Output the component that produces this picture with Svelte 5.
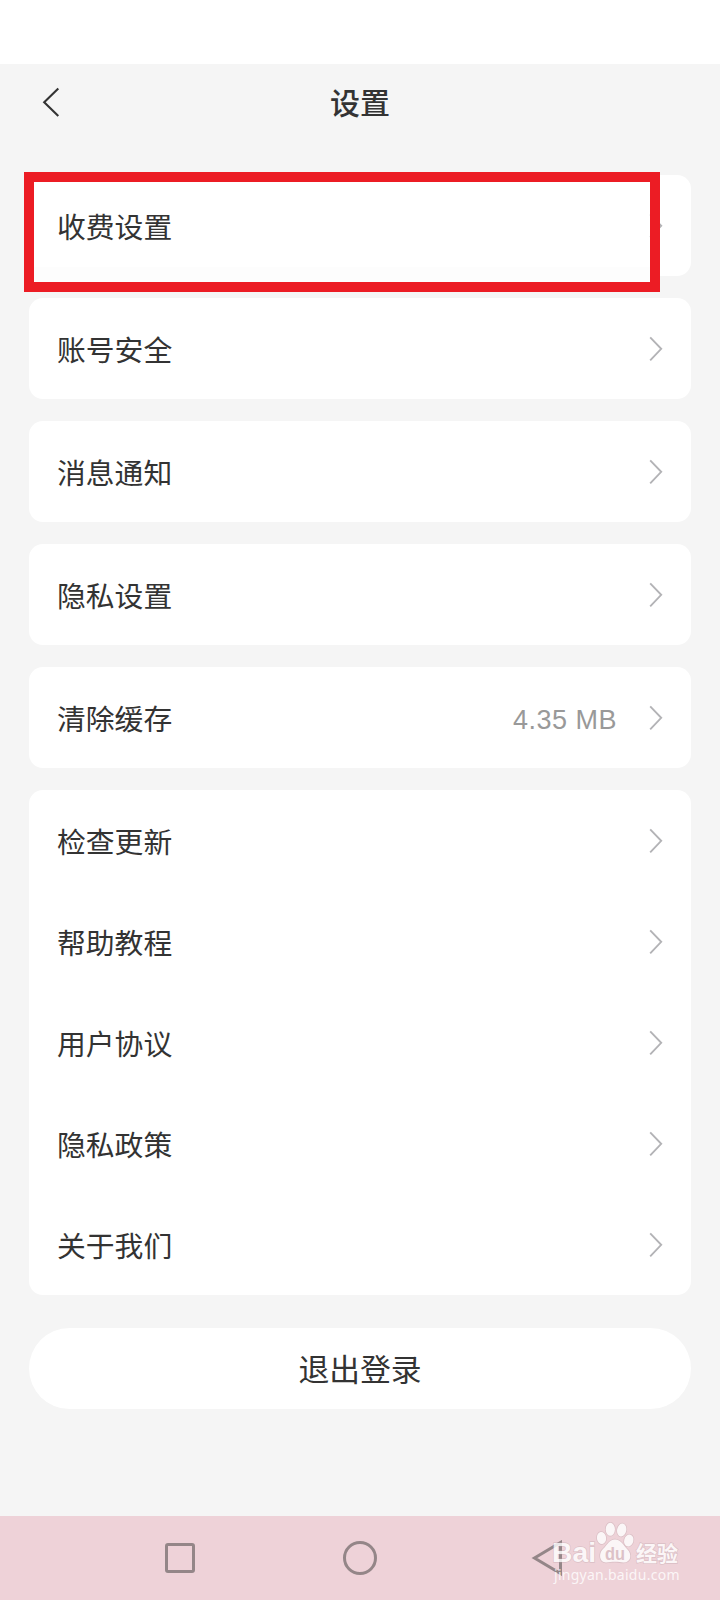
<script lang="ts">
    type Item = { label: string; value?: string };

    const groups: Item[][] = [
        [{ label: "收费设置" }],
        [{ label: "账号安全" }],
        [{ label: "消息通知" }],
        [{ label: "隐私设置" }],
        [{ label: "清除缓存", value: "4.35 MB" }],
        [
            { label: "检查更新" },
            { label: "帮助教程" },
            { label: "用户协议" },
            { label: "隐私政策" },
            { label: "关于我们" },
        ],
    ];
</script>

<div class="screen">
    <div class="status-bar"></div>

    <header>
        <svg class="back" width="20" height="32" viewBox="0 0 20 32">
            <path d="M17.3 2.5 3.2 16.2 17.3 30" />
        </svg>
        <h1>设置</h1>
    </header>

    <main>
        {#each groups as group, i}
            <div class="card">
                {#each group as item}
                    <div class="row">
                        <span class="label">{item.label}</span>
                        {#if item.value}
                            <span class="value">{item.value}</span>
                        {/if}
                        <svg class="chevron" width="14" height="26" viewBox="0 0 14 26">
                            <path d="M1.2 1.3 12.2 12.8 1.2 24.3" />
                        </svg>
                    </div>
                {/each}
                {#if i == 0}
                    <div class="highlight"></div>
                {/if}
            </div>
        {/each}

        <button class="logout">退出登录</button>
    </main>

    <nav>
        <svg width="36" height="36" viewBox="0 0 36 36">
            <rect x="4.5" y="4.5" width="27" height="27" rx="1.5" />
        </svg>
        <svg width="36" height="36" viewBox="0 0 36 36">
            <circle cx="18" cy="18" r="15.5" />
        </svg>
        <svg width="36" height="36" viewBox="0 0 36 36">
            <path d="M31.5 2.5v31L5.5 18Z" />
        </svg>

        <div class="watermark">
            <svg width="150" height="66" viewBox="0 0 150 66">
                <ellipse cx="69.5" cy="17" rx="4.6" ry="6" transform="rotate(-8 69.5 17)" />
                <ellipse cx="78.3" cy="8.3" rx="4.6" ry="6.5" />
                <ellipse cx="89.7" cy="9" rx="4.6" ry="6.5" transform="rotate(10 89.7 9)" />
                <ellipse cx="96.8" cy="19.5" rx="4.6" ry="6" transform="rotate(16 96.8 19.5)" />
                <path
                    d="M83 18.5C77 18.5 75.5 24 71 28C66.5 32 67 41.5 74 41.5C77.5 41.5 79 40.8 83 40.8S88.5 41.5 91.5 41.5C99.5 41.5 100 33 95.5 28.5C91 24 89 18.5 83 18.5Z"
                />
                <text class="bai" x="20" y="41" textLength="44" lengthAdjust="spacingAndGlyphs">Bai</text>
                <text class="du" x="73" y="38.5" textLength="20" lengthAdjust="spacingAndGlyphs">du</text>
                <text class="jingyan" x="104" y="39.5" textLength="42">经验</text>
                <text class="url" x="22" y="58.5" textLength="125.5">jingyan.baidu.com</text>
            </svg>
        </div>
    </nav>
</div>

<style>
    :global(body) {
        margin: 0;
    }

    .screen {
        display: flex;
        flex-direction: column;
        height: 1600px;
        background-color: #f5f5f5;
        color: #333;
        font-family: "Noto Sans CJK SC", sans-serif;
    }

    .status-bar {
        height: 64px;
        background-color: #fff;
    }

    header {
        display: grid;
        grid-template-columns: 80px 1fr 80px;
        align-items: center;
        height: 76px;
    }

    .back {
        margin-left: 41px;
    }

    h1 {
        margin: 0;
        padding-bottom: 3px;
        font-size: 30px;
        font-weight: 500;
        line-height: 40px;
        text-align: center;
    }

    main {
        flex: 1;
        display: flex;
        flex-direction: column;
        gap: 22px;
        padding: 35px 29px 0;
    }

    .card {
        position: relative;
        border-radius: 14px;
        background-color: #fff;
    }

    .row {
        display: flex;
        align-items: center;
        height: 101px;
        padding: 0 28px;
    }

    .label {
        flex: 1;
        font-size: 28.8px;
        line-height: 40px;
    }

    .value {
        margin-right: 32px;
        padding-top: 5px;
        color: #999;
        font-family: "Liberation Sans", sans-serif;
        font-size: 27px;
        letter-spacing: 0.5px;
    }

    svg {
        fill: none;
    }

    .back path {
        stroke: #333;
        stroke-width: 2.1;
    }

    .chevron path {
        stroke: #b3b3b6;
        stroke-width: 1.9;
    }

    /* Sits over the first card and runs past its edges */
    .highlight {
        position: absolute;
        top: -3px;
        left: -5px;
        box-sizing: border-box;
        width: 636px;
        height: 120px;
        border: 10px solid #ec1c24;
        background: linear-gradient(transparent 85px, #fdfdfd 85px);
    }

    .logout {
        height: 81px;
        margin-top: 11px;
        padding: 0 0 2px;
        border: none;
        border-radius: 41px;
        background-color: #fff;
        color: #333;
        font-family: inherit;
        font-size: 30.8px;
        line-height: 40px;
    }

    nav {
        position: relative;
        display: flex;
        justify-content: space-between;
        align-items: center;
        height: 84px;
        padding: 0 156px 0 162px;
        box-sizing: border-box;
        background-color: #eed2d8;
    }

    nav > svg {
        stroke: #948688;
        stroke-width: 3;
    }

    nav > svg:nth-child(2) {
        margin-left: -8px;
    }

    nav > svg:nth-child(3) {
        margin-right: -1px;
    }

    .watermark {
        position: absolute;
        top: 5px;
        left: 532px;
    }

    .watermark svg {
        display: block;
        fill: #fff;
        stroke: #b99ea5;
        stroke-opacity: 0.45;
        stroke-width: 1.4;
        paint-order: stroke;
        opacity: 0.8;
    }

    .watermark .bai {
        font: bold 28.5px "Liberation Sans", sans-serif;
    }

    .watermark .du {
        fill: #d9bdc4;
        font: bold 19px "Liberation Sans", sans-serif;
        stroke: none;
    }

    .watermark .jingyan {
        font: bold 21px "Noto Sans CJK SC", sans-serif;
    }

    .watermark .url {
        font: 14px "Noto Sans", sans-serif;
        stroke: none;
    }
</style>
